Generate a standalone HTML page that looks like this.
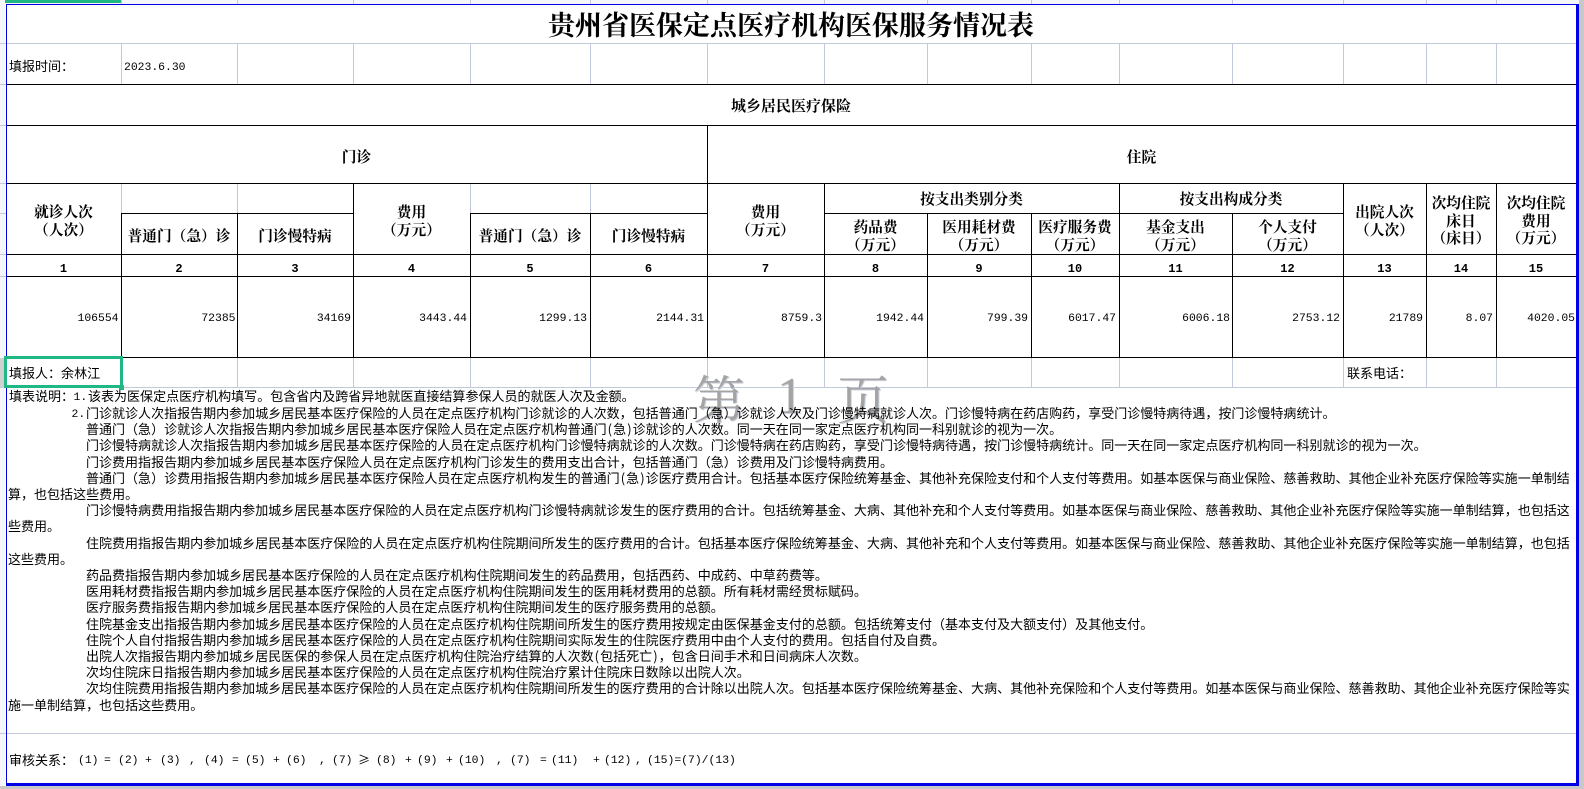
<!DOCTYPE html>
<html lang="zh-CN">
<head>
<meta charset="utf-8">
<title>贵州省医保定点医疗机构医保服务情况表</title>
<style>
html,body{margin:0;padding:0;background:#fff;}
#p{position:relative;width:1584px;height:789px;overflow:hidden;background:#fff;font-family:"Liberation Sans","WenQuanYi Zen Hei","Noto Sans CJK SC",sans-serif;color:#000;}
#p svg{position:absolute;left:0;top:0;}
.t,.h,.n,.c,.m{position:absolute;white-space:nowrap;}
.t{font-size:13.02px;line-height:16px;height:16px;font-family:"WenQuanYi Zen Hei","Noto Sans CJK SC",sans-serif;}
.t i{display:inline-block;width:.5em;font-style:normal;text-align:center;}
.h{font-family:"Noto Serif CJK SC",serif;font-weight:700;font-size:14.7px;line-height:17.6px;text-align:center;}
.c{font-family:"Liberation Mono",monospace;font-weight:700;font-size:12px;line-height:16px;top:261px;text-align:center;}
.n{font-family:"Liberation Mono",monospace;font-size:11.4px;line-height:16px;top:311px;text-align:right;}
.m{font-family:"Liberation Mono",monospace;font-size:11.4px;line-height:16px;margin-top:2px;}
.w{position:absolute;white-space:nowrap;font-family:"Noto Serif CJK SC",serif;font-weight:400;font-size:52px;line-height:52px;top:371px;color:#a4a4a4;text-shadow:1px 1px 0 #cdd3e0;}
</style>
</head>
<body>
<div id="p">
<svg width="1584" height="789" shape-rendering="crispEdges">
<rect x="0" y="0" width="1584" height="789" fill="#fff"/>
<rect x="0" y="0" width="5" height="789" fill="#f5f6fa"/>
<rect x="0" y="0" width="1584" height="4" fill="#f5f6fa"/>
<rect x="0" y="358" width="4" height="30" fill="#d0d0d0"/>
<rect x="1579" y="0" width="5" height="789" fill="#c8c8c8"/>
<rect x="0" y="786" width="1584" height="3" fill="#c8c8c8"/>
<rect x="5" y="0" width="116" height="3" fill="#1fb884"/>
<g fill="#c3c9dc">
<rect x="0" y="43" width="1576" height="1"/>
<rect x="0" y="84" width="6" height="1"/><rect x="0" y="125" width="6" height="1"/><rect x="0" y="183" width="6" height="1"/><rect x="0" y="213" width="6" height="1"/><rect x="0" y="254" width="6" height="1"/><rect x="0" y="276" width="6" height="1"/>
<rect x="0" y="387" width="1576" height="1"/>
<rect x="0" y="733" width="1576" height="1"/>
<rect x="121" y="0" width="1" height="4"/><rect x="237" y="0" width="1" height="4"/><rect x="353" y="0" width="1" height="4"/><rect x="470" y="0" width="1" height="4"/><rect x="590" y="0" width="1" height="4"/><rect x="707" y="0" width="1" height="4"/><rect x="824" y="0" width="1" height="4"/><rect x="927" y="0" width="1" height="4"/><rect x="1031" y="0" width="1" height="4"/><rect x="1119" y="0" width="1" height="4"/><rect x="1232" y="0" width="1" height="4"/><rect x="1343" y="0" width="1" height="4"/><rect x="1426" y="0" width="1" height="4"/><rect x="1496" y="0" width="1" height="4"/>
<rect x="121" y="44" width="1" height="40"/><rect x="237" y="44" width="1" height="40"/><rect x="353" y="44" width="1" height="40"/><rect x="470" y="44" width="1" height="40"/><rect x="590" y="44" width="1" height="40"/><rect x="707" y="44" width="1" height="40"/><rect x="824" y="44" width="1" height="40"/><rect x="927" y="44" width="1" height="40"/><rect x="1031" y="44" width="1" height="40"/><rect x="1119" y="44" width="1" height="40"/><rect x="1232" y="44" width="1" height="40"/><rect x="1343" y="44" width="1" height="40"/><rect x="1426" y="44" width="1" height="40"/><rect x="1496" y="44" width="1" height="40"/>
<rect x="121" y="183" width="1" height="30"/><rect x="237" y="183" width="1" height="30"/><rect x="470" y="183" width="1" height="30"/><rect x="590" y="183" width="1" height="30"/>
<rect x="121" y="358" width="1" height="29"/><rect x="237" y="358" width="1" height="29"/><rect x="353" y="358" width="1" height="29"/><rect x="470" y="358" width="1" height="29"/><rect x="590" y="358" width="1" height="29"/><rect x="707" y="358" width="1" height="29"/><rect x="824" y="358" width="1" height="29"/><rect x="927" y="358" width="1" height="29"/><rect x="1031" y="358" width="1" height="29"/><rect x="1119" y="358" width="1" height="29"/><rect x="1232" y="358" width="1" height="29"/><rect x="1343" y="358" width="1" height="29"/><rect x="1426" y="358" width="1" height="29"/><rect x="1496" y="358" width="1" height="29"/>
</g>
<g fill="#000">
<rect x="6" y="84" width="1570" height="1"/><rect x="6" y="125" width="1570" height="1"/><rect x="6" y="183" width="1570" height="1"/><rect x="6" y="254" width="1570" height="1"/><rect x="6" y="276" width="1570" height="1"/><rect x="6" y="357" width="1570" height="1"/>
<rect x="121" y="213" width="232" height="1"/><rect x="470" y="213" width="237" height="1"/><rect x="824" y="213" width="519" height="1"/>
<rect x="121" y="213" width="1" height="144"/><rect x="237" y="213" width="1" height="144"/><rect x="353" y="183" width="1" height="174"/><rect x="470" y="213" width="1" height="144"/><rect x="590" y="213" width="1" height="144"/>
<rect x="707" y="125" width="1" height="232"/>
<rect x="824" y="183" width="1" height="174"/><rect x="927" y="213" width="1" height="144"/><rect x="1031" y="213" width="1" height="144"/><rect x="1119" y="183" width="1" height="174"/><rect x="1232" y="213" width="1" height="144"/><rect x="1343" y="183" width="1" height="174"/><rect x="1426" y="183" width="1" height="174"/><rect x="1496" y="183" width="1" height="174"/>
</g>
<g fill="#0000e6">
<rect x="6" y="4" width="1573" height="1"/>
<rect x="6" y="4" width="1" height="782"/>
<rect x="1576" y="4" width="3" height="782"/>
<rect x="6" y="783" width="1573" height="3"/>
</g>
<g fill="#1fb884">
<rect x="4" y="356" width="119" height="3"/>
<rect x="4" y="385" width="119" height="3"/>
<rect x="4" y="356" width="3" height="32"/>
<rect x="120" y="356" width="3" height="32"/>
<rect x="119" y="385" width="5" height="5"/>
</g>
</svg>

<div class="w" style="left:693px">第</div>
<div class="w" style="left:777px;font-family:'Liberation Serif',serif">1</div>
<div class="w" style="left:837px">页</div>

<div class="h" style="left:6px;width:1570px;top:4px;font-size:27px;line-height:40px;">贵州省医保定点医疗机构医保服务情况表</div>

<div class="t" style="left:9px;top:58px">填报时间&#xFF1A;</div>
<div class="m" style="left:124px;top:58px">2023.6.30</div>

<div class="h" style="left:6px;width:1570px;top:96px;font-size:15px;line-height:20px;">城乡居民医疗保险</div>
<div class="h" style="left:6px;width:701px;top:147px;line-height:20px">门诊</div>
<div class="h" style="left:707px;width:869px;top:147px;line-height:20px">住院</div>

<div class="h" style="left:6px;width:115px;top:203px">就诊人次<br>&#xFF08;人次&#xFF09;</div>
<div class="h" style="left:121px;width:116px;top:227px">普通门&#xFF08;急&#xFF09;诊</div>
<div class="h" style="left:237px;width:116px;top:227px">门诊慢特病</div>
<div class="h" style="left:353px;width:117px;top:203px">费用<br>&#xFF08;万元&#xFF09;</div>
<div class="h" style="left:470px;width:120px;top:227px">普通门&#xFF08;急&#xFF09;诊</div>
<div class="h" style="left:590px;width:117px;top:227px">门诊慢特病</div>
<div class="h" style="left:707px;width:117px;top:203px">费用<br>&#xFF08;万元&#xFF09;</div>
<div class="h" style="left:824px;width:295px;top:190px">按支出类别分类</div>
<div class="h" style="left:824px;width:103px;top:218px">药品费<br>&#xFF08;万元&#xFF09;</div>
<div class="h" style="left:927px;width:104px;top:218px">医用耗材费<br>&#xFF08;万元&#xFF09;</div>
<div class="h" style="left:1031px;width:88px;top:218px">医疗服务费<br>&#xFF08;万元&#xFF09;</div>
<div class="h" style="left:1119px;width:224px;top:190px">按支出构成分类</div>
<div class="h" style="left:1119px;width:113px;top:218px">基金支出<br>&#xFF08;万元&#xFF09;</div>
<div class="h" style="left:1232px;width:111px;top:218px">个人支付<br>&#xFF08;万元&#xFF09;</div>
<div class="h" style="left:1343px;width:83px;top:203px">出院人次<br>&#xFF08;人次&#xFF09;</div>
<div class="h" style="left:1426px;width:70px;top:194px">次均住院<br>床日<br>&#xFF08;床日&#xFF09;</div>
<div class="h" style="left:1496px;width:80px;top:194px">次均住院<br>费用<br>&#xFF08;万元&#xFF09;</div>

<div class="c" style="left:6px;width:115px">1</div>
<div class="c" style="left:121px;width:116px">2</div>
<div class="c" style="left:237px;width:116px">3</div>
<div class="c" style="left:353px;width:117px">4</div>
<div class="c" style="left:470px;width:120px">5</div>
<div class="c" style="left:590px;width:117px">6</div>
<div class="c" style="left:707px;width:117px">7</div>
<div class="c" style="left:824px;width:103px">8</div>
<div class="c" style="left:927px;width:104px">9</div>
<div class="c" style="left:1031px;width:88px">10</div>
<div class="c" style="left:1119px;width:113px">11</div>
<div class="c" style="left:1232px;width:111px">12</div>
<div class="c" style="left:1343px;width:83px">13</div>
<div class="c" style="left:1426px;width:70px">14</div>
<div class="c" style="left:1496px;width:80px">15</div>

<div class="n" style="left:6px;width:112.5px">106554</div>
<div class="n" style="left:121px;width:114.5px">72385</div>
<div class="n" style="left:237px;width:114px">34169</div>
<div class="n" style="left:353px;width:114px">3443.44</div>
<div class="n" style="left:470px;width:117px">1299.13</div>
<div class="n" style="left:590px;width:114px">2144.31</div>
<div class="n" style="left:707px;width:115px">8759.3</div>
<div class="n" style="left:824px;width:100px">1942.44</div>
<div class="n" style="left:927px;width:101px">799.39</div>
<div class="n" style="left:1031px;width:85px">6017.47</div>
<div class="n" style="left:1119px;width:111px">6006.18</div>
<div class="n" style="left:1232px;width:108px">2753.12</div>
<div class="n" style="left:1343px;width:80px">21789</div>
<div class="n" style="left:1426px;width:67px">8.07</div>
<div class="n" style="left:1496px;width:79px">4020.05</div>

<div class="t" style="left:9px;top:365px">填报人&#xFF1A;余林江</div>
<div class="t" style="left:1347px;top:365px">联系电话&#xFF1A;</div>

<div class="t" style="left:9px;top:388px">填表说明&#xFF1A;</div>
<div class="m" style="left:73.5px;top:388px">1.</div>
<div class="t" style="left:88px;top:388px">该表为医保定点医疗机构填写。包含省内及跨省异地就医直接结算参保人员的就医人次及金额。</div>
<div class="m" style="left:71.5px;top:405px">2.</div>
<div class="t" style="left:86px;top:405px">门诊就诊人次指报告期内参加城乡居民基本医疗保险的人员在定点医疗机构门诊就诊的人次数&#xFF0C;包括普通门&#xFF08;急&#xFF09;诊就诊人次及门诊慢特病就诊人次。门诊慢特病在药店购药&#xFF0C;享受门诊慢特病待遇&#xFF0C;按门诊慢特病统计。</div>
<div class="t" style="left:86px;top:421px">普通门&#xFF08;急&#xFF09;诊就诊人次指报告期内参加城乡居民基本医疗保险人员在定点医疗机构普通门<i>(</i>急<i>)</i>诊就诊的人次数。同一天在同一家定点医疗机构同一科别就诊的视为一次。</div>
<div class="t" style="left:86px;top:437px">门诊慢特病就诊人次指报告期内参加城乡居民基本医疗保险的人员在定点医疗机构门诊慢特病就诊的人次数。门诊慢特病在药店购药&#xFF0C;享受门诊慢特病待遇&#xFF0C;按门诊慢特病统计。同一天在同一家定点医疗机构同一科别就诊的视为一次。</div>
<div class="t" style="left:86px;top:454px">门诊费用指报告期内参加城乡居民基本医疗保险人员在定点医疗机构门诊发生的费用支出合计&#xFF0C;包括普通门&#xFF08;急&#xFF09;诊费用及门诊慢特病费用。</div>
<div class="t" style="left:86px;top:470px">普通门&#xFF08;急&#xFF09;诊费用指报告期内参加城乡居民基本医疗保险人员在定点医疗机构发生的普通门<i>(</i>急<i>)</i>诊医疗费用合计。包括基本医疗保险统筹基金、其他补充保险支付和个人支付等费用。如基本医保与商业保险、慈善救助、其他企业补充医疗保险等实施一单制结</div>
<div class="t" style="left:8px;top:486px">算&#xFF0C;也包括这些费用。</div>
<div class="t" style="left:86px;top:502px">门诊慢特病费用指报告期内参加城乡居民基本医疗保险的人员在定点医疗机构门诊慢特病就诊发生的医疗费用的合计。包括统筹基金、大病、其他补充和个人支付等费用。如基本医保与商业保险、慈善救助、其他企业补充医疗保险等实施一单制结算&#xFF0C;也包括这</div>
<div class="t" style="left:8px;top:518px">些费用。</div>
<div class="t" style="left:86px;top:535px">住院费用指报告期内参加城乡居民基本医疗保险的人员在定点医疗机构住院期间所发生的医疗费用的合计。包括基本医疗保险统筹基金、大病、其他补充和个人支付等费用。如基本医保与商业保险、慈善救助、其他企业补充医疗保险等实施一单制结算&#xFF0C;也包括</div>
<div class="t" style="left:8px;top:551px">这些费用。</div>
<div class="t" style="left:86px;top:567px">药品费指报告期内参加城乡居民基本医疗保险的人员在定点医疗机构住院期间发生的药品费用&#xFF0C;包括西药、中成药、中草药费等。</div>
<div class="t" style="left:86px;top:583px">医用耗材费指报告期内参加城乡居民基本医疗保险的人员在定点医疗机构住院期间发生的医用耗材费用的总额。所有耗材需经贯标赋码。</div>
<div class="t" style="left:86px;top:599px">医疗服务费指报告期内参加城乡居民基本医疗保险的人员在定点医疗机构住院期间发生的医疗服务费用的总额。</div>
<div class="t" style="left:86px;top:616px">住院基金支出指报告期内参加城乡居民基本医疗保险的人员在定点医疗机构住院期间所发生的医疗费用按规定由医保基金支付的总额。包括统筹支付&#xFF08;基本支付及大额支付&#xFF09;及其他支付。</div>
<div class="t" style="left:86px;top:632px">住院个人自付指报告期内参加城乡居民基本医疗保险的人员在定点医疗机构住院期间实际发生的住院医疗费用中由个人支付的费用。包括自付及自费。</div>
<div class="t" style="left:86px;top:648px">出院人次指报告期内参加城乡居民医保的参保人员在定点医疗机构住院治疗结算的人次数<i>(</i>包括死亡<i>)</i>&#xFF0C;包含日间手术和日间病床人次数。</div>
<div class="t" style="left:86px;top:664px">次均住院床日指报告期内参加城乡居民基本医疗保险的人员在定点医疗机构住院治疗累计住院床日数除以出院人次。</div>
<div class="t" style="left:86px;top:680px">次均住院费用指报告期内参加城乡居民基本医疗保险的人员在定点医疗机构住院期间所发生的医疗费用的合计除以出院人次。包括基本医疗保险统筹基金、大病、其他补充保险和个人支付等费用。如基本医保与商业保险、慈善救助、其他企业补充医疗保险等实</div>
<div class="t" style="left:8px;top:697px">施一单制结算&#xFF0C;也包括这些费用。</div>

<div class="t" style="left:9px;top:752px">审核关系&#xFF1A;</div>
<div class="m" style="left:78px;top:751px">(1)</div><div class="m" style="left:104px;top:751px">=</div><div class="m" style="left:118px;top:751px">(2)</div><div class="m" style="left:145px;top:751px">+</div><div class="m" style="left:160px;top:751px">(3)</div><div class="m" style="left:189px;top:751px">,</div>
<div class="m" style="left:204px;top:751px">(4)</div><div class="m" style="left:232px;top:751px">=</div><div class="m" style="left:245px;top:751px">(5)</div><div class="m" style="left:273px;top:751px">+</div><div class="m" style="left:286px;top:751px">(6)</div><div class="m" style="left:319px;top:751px">,</div>
<div class="m" style="left:332px;top:751px">(7)</div><div class="t" style="left:358px;top:752px;font-size:12px">≥</div><div class="m" style="left:376px;top:751px">(8)</div><div class="m" style="left:405px;top:751px">+</div><div class="m" style="left:417px;top:751px">(9)</div><div class="m" style="left:446px;top:751px">+</div><div class="m" style="left:458px;top:751px">(10)</div><div class="m" style="left:496px;top:751px">,</div>
<div class="m" style="left:510px;top:751px">(7)</div><div class="m" style="left:540px;top:751px">=</div><div class="m" style="left:551px;top:751px">(11)</div><div class="m" style="left:593px;top:751px">+</div><div class="m" style="left:604px;top:751px">(12)</div><div class="m" style="left:635px;top:751px">,</div>
<div class="m" style="left:647px;top:751px">(15)=(7)/(13)</div>
</div>
</body>
</html>
